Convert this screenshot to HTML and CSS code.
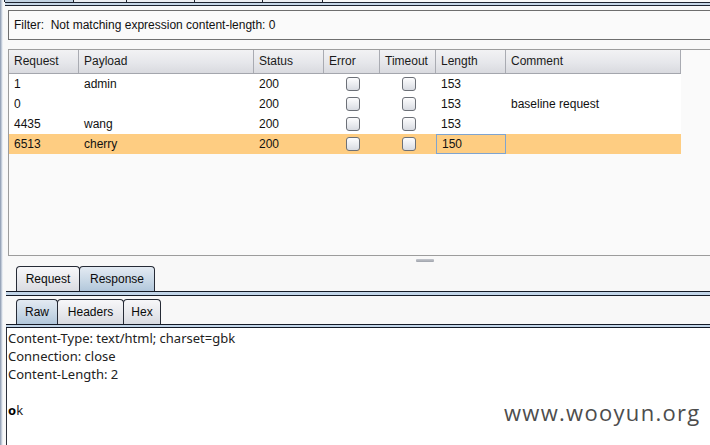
FILE: index.html
```html
<!DOCTYPE html>
<html>
<head>
<meta charset="utf-8">
<link rel="stylesheet" href="styles.css">
</head>
<body>
<div class="frame"></div>
<div class="main">
  <div class="toptabs">
    <span class="stub w2"></span>
    <span class="stub sel w69"></span>
    <span class="stub w53"></span>
    <span class="stub w68"></span>
    <span class="stub w68"></span>
    <span class="stub w60"></span>
  </div>
  <div class="topline"></div>

  <div class="filter">Filter:&nbsp; Not matching expression content-length: 0</div>

  <div class="results">
    <div class="row head">
      <div class="c c1">Request</div>
      <div class="c c2">Payload</div>
      <div class="c c3">Status</div>
      <div class="c c4">Error</div>
      <div class="c c5">Timeout</div>
      <div class="c c6">Length</div>
      <div class="c c7">Comment</div>
    </div>
    <div class="row">
      <div class="c c1">1</div>
      <div class="c c2">admin</div>
      <div class="c c3">200</div>
      <div class="c c4 ck"><span class="cb"></span></div>
      <div class="c c5 ck"><span class="cb"></span></div>
      <div class="c c6">153</div>
      <div class="c c7"></div>
    </div>
    <div class="row">
      <div class="c c1">0</div>
      <div class="c c2"></div>
      <div class="c c3">200</div>
      <div class="c c4 ck"><span class="cb"></span></div>
      <div class="c c5 ck"><span class="cb"></span></div>
      <div class="c c6">153</div>
      <div class="c c7">baseline request</div>
    </div>
    <div class="row">
      <div class="c c1">4435</div>
      <div class="c c2">wang</div>
      <div class="c c3">200</div>
      <div class="c c4 ck"><span class="cb"></span></div>
      <div class="c c5 ck"><span class="cb"></span></div>
      <div class="c c6">153</div>
      <div class="c c7"></div>
    </div>
    <div class="row selrow">
      <div class="c c1">6513</div>
      <div class="c c2">cherry</div>
      <div class="c c3">200</div>
      <div class="c c4 ck"><span class="cb"></span></div>
      <div class="c c5 ck"><span class="cb"></span></div>
      <div class="c c6 focus">150</div>
      <div class="c c7"></div>
    </div>
  </div>

  <div class="splitter"><span class="handle"></span></div>

  <div class="tabs">
    <div class="tab t-req">Request</div>
    <div class="tab t-resp sel">Response</div>
  </div>
  <div class="tabline thick"></div>

  <div class="tabs second">
    <div class="tab t-raw sel">Raw</div>
    <div class="tab t-hdr">Headers</div>
    <div class="tab t-hex">Hex</div>
  </div>
  <div class="tabline thin"></div>

  <div class="content">
    <div class="line">Content-Type: text/html; charset=gbk</div>
    <div class="line">Connection: close</div>
    <div class="line">Content-Length: 2</div>
    <div class="line">&nbsp;</div>
    <div class="line"><b class="caret">o</b>k</div>
  </div>
  <div class="watermark">www.wooyun.org</div>
</div>
</body>
</html>
```

FILE: styles.css
```css
html, body {
  margin: 0;
  padding: 0;
}
body {
  width: 710px;
  height: 445px;
  overflow: hidden;
  display: flex;
  background: #f8f8f8;
  font-family: "Liberation Sans", Arial, sans-serif;
  font-size: 12px;
  color: #111;
}
.frame {
  width: 3px;
  flex: none;
  background: linear-gradient(to right, #8f9db2 0, #a3afc2 1px, #dfe5ed 2px, #eef2f6 3px);
}
.main {
  flex: 1;
  min-width: 0;
  display: flex;
  flex-direction: column;
  position: relative;
}

/* top tab stubs */
.toptabs {
  height: 2px;
  display: flex;
}
.stub {
  box-sizing: border-box;
  height: 2px;
  border-right: 1px solid #1d2330;
  background: #eceef2;
}
.stub.sel { background: #c3d3e3; }
.w2 { width: 2px; background: #fafafa; }
.w69 { width: 69px; }
.w53 { width: 53px; }
.w68 { width: 68px; }
.w60 { width: 60px; }
.topline {
  height: 2px;
  border-top: 1px solid #1d2330;
  border-bottom: 1px solid #1d2330;
  background: #c6d6e6;
  margin-left: 2px;
}

/* filter */
.filter {
  margin: 4px 0 0 5px;
  height: 28px;
  line-height: 28px;
  border: 1px solid #6e6e6e;
  border-right: none;
  background: #fafafa;
  padding-left: 5px;
  color: #111;
}

/* results table */
.results {
  margin: 9px 0 0 5px;
  height: 205px;
  border: 1px solid #9c9c9c;
  border-right: none;
  background: #fafafa;
}
.row {
  display: flex;
  height: 20px;
  width: 672px;
  background: #ffffff;
}
.row.head {
  height: 23px;
  border-bottom: 1px solid #a4a6ad;
  background: linear-gradient(#f2f2f4 0%, #e6e7eb 55%, #d9dadf 100%);
  color: #1a1a1a;
}
.row.selrow { background: #fecd82; }
.c {
  box-sizing: border-box;
  padding-left: 5px;
  line-height: 20px;
  white-space: nowrap;
  overflow: hidden;
}
.head .c {
  line-height: 23px;
  border-right: 1px solid #a9abb2;
}
.c1 { width: 70px; }
.c2 { width: 175px; }
.c3 { width: 70px; }
.c4 { width: 56px; }
.c5 { width: 56px; }
.c6 { width: 70px; }
.c7 { width: 175px; }
.ck {
  display: flex;
  align-items: center;
  justify-content: center;
  padding-left: 1px;
}
.cb {
  box-sizing: border-box;
  width: 14px;
  height: 14px;
  border: 1px solid #6c7077;
  border-radius: 3px;
  background: linear-gradient(#fdfdfe, #e9ebef 55%, #d8dbe2);
}
.focus {
  border: 1px solid #7fa4cf;
  padding-left: 5px;
  line-height: 18px;
}

/* splitter */
.splitter {
  height: 10px;
  display: flex;
}
.handle {
  margin: 3px 0 0 413px;
  width: 18px;
  height: 3px;
  border-radius: 1px;
  background: linear-gradient(#c4c7ce, #9fa3ab);
}

/* tabs */
.tabs {
  display: flex;
  height: 25px;
  padding-left: 13px;
}
.tabs.second { margin-top: 3px; }
.tab {
  box-sizing: border-box;
  height: 25px;
  border: 1px solid #262b36;
  border-bottom: none;
  border-radius: 4px 4px 0 0;
  background: linear-gradient(#f7f7f9, #e6e7eb 60%, #d9dbe1);
  text-align: center;
  line-height: 24px;
  color: #0a0a0a;
}
.tab + .tab { margin-left: -1px; }
.tab.sel { background: linear-gradient(#e3eaf2, #c9d8e6 55%, #b2c7db); }
.t-req { width: 64px; }
.t-resp { width: 76px; }
.t-raw { width: 42px; }
.t-hdr { width: 67px; }
.t-hex { width: 38px; }
.tabline {
  margin-left: 3px;
  border-top: 1px solid #141a26;
  border-bottom: 1px solid #141a26;
  background: #c2d5e8;
}
.tabline.thick { height: 3px; }
.tabline.thin { height: 2px; }

/* content */
.content {
  flex: 1;
  margin-left: 3px;
  border-left: 1px solid #2a2f3a;
  background: #ffffff;
  padding: 1px 0 0 1px;
  font-family: "Noto Sans", "DejaVu Sans", sans-serif;
  font-size: 13px;
  color: #222;
}
.line {
  height: 18px;
  line-height: 18px;
  white-space: pre;
}
.caret { font-weight: bold; color: #000; }
.watermark {
  position: absolute;
  left: 501px;
  top: 399px;
  font-family: "Open Sans", "Noto Sans", sans-serif;
  font-size: 22px;
  letter-spacing: 1.3px;
  color: #4d4d4d;
  line-height: 26px;
}
```
